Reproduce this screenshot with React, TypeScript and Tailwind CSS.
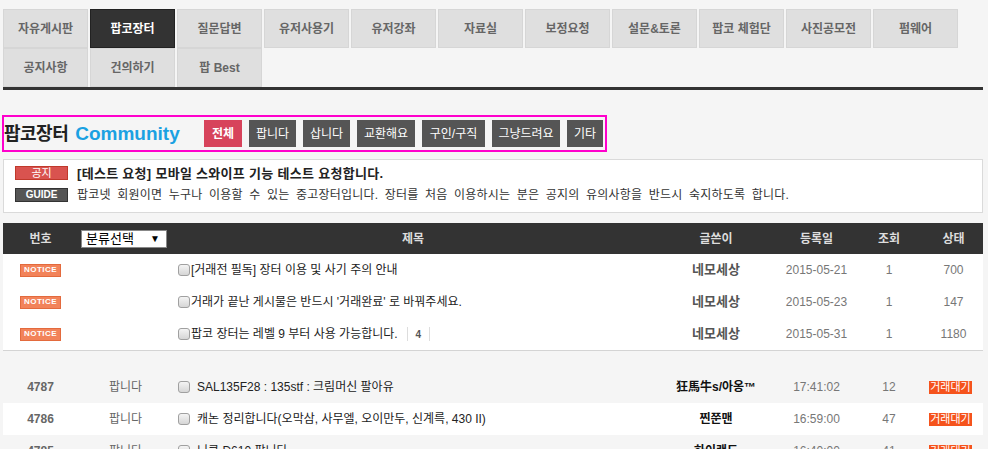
import React from "react";

type Post = {
    no: string;
    category: string;
    title: string;
    writer: string;
    time: string;
    views: string;
};

const tabsTop = ["자유게시판", "팝코장터", "질문답변", "유저사용기", "유저강좌", "자료실", "보정요청", "설문&토론", "팝코 체험단", "사진공모전", "펌웨어"];
const tabsBottom = ["공지사항", "건의하기", "팝 Best"];

const filters = [
    { label: "전체", w: "w-[38px]", active: true },
    { label: "팝니다", w: "w-[47px]", active: false },
    { label: "삽니다", w: "w-[47px]", active: false },
    { label: "교환해요", w: "w-[58px]", active: false },
    { label: "구인/구직", w: "w-[63px]", active: false },
    { label: "그냥드려요", w: "w-[68px]", active: false },
    { label: "기타", w: "w-[36px]", active: false },
];

const notices = [
    { title: "[거래전 필독] 장터 이용 및 사기 주의 안내", date: "2015-05-21", views: "1", state: "700", comments: 0 },
    { title: "거래가 끝난 게시물은 반드시 '거래완료' 로 바꿔주세요.", date: "2015-05-23", views: "1", state: "147", comments: 0 },
    { title: "팝코 장터는 레벨 9 부터 사용 가능합니다.", date: "2015-05-31", views: "1", state: "1180", comments: 4 },
];

const posts: Post[] = [
    { no: "4787", category: "팝니다", title: "SAL135F28 : 135stf : 크림머신 팔아유", writer: "狂馬牛s/아옹™", time: "17:41:02", views: "12" },
    { no: "4786", category: "팝니다", title: "캐논 정리합니다(오막삼, 사무엘, 오이만두, 신계륵, 430 II)", writer: "찐쭌맨", time: "16:59:00", views: "47" },
    { no: "4785", category: "팝니다", title: "니콘 D610 팝니다", writer: "하이랜드", time: "16:40:00", views: "41" },
];

function Checkbox() {
    return (
        <span className="inline-block w-[12px] h-[12px] shrink-0 rounded-[3px] border border-[#a0a0a0] bg-gradient-to-b from-[#f4f4f4] to-[#d6d6d6]" />
    );
}

function Tab({ label, active }: { label: string; active?: boolean }) {
    return (
        <div
            className={`w-[85px] h-[39px] flex items-center justify-center border text-[12px] font-bold ${
                active ? "bg-[#333] border-[#222] text-white" : "bg-[#dfdfdf] border-[#d6d6d6] text-[#666]"
            }`}
        >
            {label}
        </div>
    );
}

export default function App() {
    return (
        <div className="h-screen overflow-hidden bg-[#f5f5f5] font-['Liberation_Sans','Noto_Sans_CJK_KR',sans-serif] text-[#333]">
            <div className="w-[980px] ml-[3px] pt-[9px]">
                {/* 상단 탭 */}
                <div className="flex gap-x-[2px]">
                    {tabsTop.map((t) => (
                        <Tab key={t} label={t} active={t === "팝코장터"} />
                    ))}
                </div>
                <div className="flex gap-x-[2px]">
                    {tabsBottom.map((t) => (
                        <Tab key={t} label={t} />
                    ))}
                </div>
                <div className="h-[3px] bg-[#333]" />

                {/* 타이틀 + 분류 버튼 */}
                <div className="mt-[25px] -ml-[1px] inline-flex items-center h-[37px] border-2 border-[#ff00cc] pr-[2px]">
                    <div className="w-[200px] flex items-baseline">
                        <span className="text-[18px] font-bold leading-none text-[#222] tracking-[-0.5px]">팝코장터</span>
                        <span className="ml-[7px] text-[19px] font-bold leading-none text-[#1ba1e2]">Community</span>
                    </div>
                    <div className="flex gap-[7px]">
                        {filters.map((f) => (
                            <div
                                key={f.label}
                                className={`${f.w} h-[27px] flex items-center justify-center text-[12px] text-white ${
                                    f.active ? "bg-[#d7435b] font-bold" : "bg-[#555]"
                                }`}
                            >
                                {f.label}
                            </div>
                        ))}
                    </div>
                </div>

                {/* 공지 / 가이드 */}
                <div className="mt-[7px] h-[54px] bg-white border border-[#dadada] px-[11px] py-[6px] flex flex-col gap-[8px]">
                    <div className="flex items-center">
                        <span className="w-[53px] h-[14px] flex items-center justify-center bg-[#d9534f] border border-[#c0392b] text-white text-[11px] leading-none">
                            공지
                        </span>
                        <span className="ml-[9px] text-[13px] font-bold leading-none text-[#222] tracking-[0.3px]">
                            [테스트 요청] 모바일 스와이프 기능 테스트 요청합니다.
                        </span>
                    </div>
                    <div className="flex items-center">
                        <span className="w-[53px] h-[14px] flex items-center justify-center bg-[#555] border border-[#333] text-white text-[10px] font-bold leading-none">
                            GUIDE
                        </span>
                        <span className="ml-[9px] text-[12px] leading-none text-[#333] tracking-[0.2px] [word-spacing:3px]">
                            팝코넷 회원이면 누구나 이용할 수 있는 중고장터입니다. 장터를 처음 이용하시는 분은 공지의 유의사항을 반드시 숙지하도록 합니다.
                        </span>
                    </div>
                </div>

                {/* 목록 헤더 */}
                <div className="mt-[10px] h-[31px] bg-[#333] flex items-center text-[12px] font-bold text-[#ddd]">
                    <div className="w-[75px] text-center">번호</div>
                    <div className="w-[95px] pl-[3px]">
                        <div className="w-[86px] h-[18px] bg-white border border-[#888] flex items-center justify-between pl-[4px] pr-[6px] text-[13px] font-normal text-black">
                            <span className="leading-none">분류선택</span>
                            <span className="text-[10px] leading-none">▼</span>
                        </div>
                    </div>
                    <div className="w-[480px] text-center">제목</div>
                    <div className="w-[126px] text-center">글쓴이</div>
                    <div className="w-[75px] text-center">등록일</div>
                    <div className="w-[70px] text-center">조회</div>
                    <div className="flex-1 text-center">상태</div>
                </div>

                {/* 공지글 */}
                <div className="bg-white border-b border-[#d4d4d4]">
                    {notices.map((n) => (
                        <div key={n.title} className="h-[32px] flex items-center text-[12px]">
                            <div className="w-[75px] flex justify-center">
                                <span className="w-[41px] h-[13px] flex items-center justify-center bg-[#f2835a] border border-[#e36a3d] text-white text-[8px] font-black tracking-[0.5px] leading-none">
                                    NOTICE
                                </span>
                            </div>
                            <div className="w-[95px]" />
                            <div className="w-[480px] flex items-center pl-[5px] text-[#222]">
                                <Checkbox />
                                <span className="ml-[1px] leading-none">{n.title}</span>
                                {n.comments > 0 && (
                                    <span className="ml-[9px] w-[23px] h-[14px] flex items-center justify-center border-x border-[#ddd] text-[10px] font-bold text-[#555]">
                                        {n.comments}
                                    </span>
                                )}
                            </div>
                            <div className="w-[126px] text-center text-[13px] font-bold text-[#555]">네모세상</div>
                            <div className="w-[75px] text-center text-[#777]">{n.date}</div>
                            <div className="w-[70px] text-center text-[#777]">{n.views}</div>
                            <div className="flex-1 text-center text-[#777]">{n.state}</div>
                        </div>
                    ))}
                </div>

                {/* 일반글 */}
                <div className="mt-[20px]">
                    {posts.map((p, i) => (
                        <div key={p.no} className={`h-[32px] flex items-center text-[12px] ${i % 2 === 1 ? "bg-white" : ""}`}>
                            <div className="w-[75px] text-center font-bold text-[#666]">{p.no}</div>
                            <div className="w-[95px] text-center text-[#666]">{p.category}</div>
                            <div className="w-[480px] flex items-center pl-[5px] text-[#222]">
                                <Checkbox />
                                <span className="ml-[7px] leading-none">{p.title}</span>
                            </div>
                            <div className="w-[126px] text-center font-bold text-[#111]">{p.writer}</div>
                            <div className="w-[75px] text-center text-[#777]">{p.time}</div>
                            <div className="w-[70px] text-center text-[#777]">{p.views}</div>
                            <div className="flex-1 flex justify-center pr-[6px]">
                                <span className="h-[13px] px-[1px] flex items-center bg-[#f5531c] text-white text-[11px] leading-none">
                                    거래대기
                                </span>
                            </div>
                        </div>
                    ))}
                </div>
            </div>
        </div>
    );
}
